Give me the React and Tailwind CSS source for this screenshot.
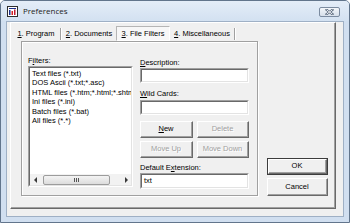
import React from 'react';

const sunken = "border-t border-l border-[#a0a0a0] border-b border-r border-b-white border-r-white";

function AppIcon() {
  return (
    <svg width="11" height="11" viewBox="0 0 11 11" className="shrink-0">
      <rect x="0.5" y="0.5" width="10" height="10" fill="#fff" stroke="#2d2d2d" />
      <rect x="2" y="2" width="7" height="1" fill="#1b2f8c" />
      <rect x="2" y="4" width="1.5" height="5" fill="#1b2f8c" />
      <rect x="4.5" y="5" width="1.5" height="4" fill="#d42020" />
      <rect x="7" y="3.5" width="1.5" height="5.5" fill="#c01830" />
    </svg>
  );
}

function CloseButton() {
  return (
    <div className="w-[21px] h-[10px] mt-[1px] rounded-[2px] border border-[#7b8ba0] bg-gradient-to-b from-[#f3f6fa] to-[#d6dfea] flex items-center justify-center">
      <svg width="9" height="6" viewBox="0 0 9 6">
        <path d="M1.5 0.8 L7.5 5.2 M7.5 0.8 L1.5 5.2" stroke="#55657a" strokeWidth="2.2" strokeLinecap="square" />
        <path d="M1.5 0.8 L7.5 5.2 M7.5 0.8 L1.5 5.2" stroke="#fff" strokeWidth="0.9" />
      </svg>
    </div>
  );
}

function TextBox({ value, className = "" }) {
  return (
    <div className={`${sunken} ${className}`}>
      <div className="h-full border-t border-l border-[#696969] border-b border-r border-b-[#e3e3e3] border-r-[#e3e3e3] bg-white pl-[2px] text-[7.5px] leading-[11px]">
        {value}
      </div>
    </div>
  );
}

function Btn({ children, disabled, isDefault, className = "" }) {
  const inner = (
    <div className="h-full border-t border-l border-white border-b border-r border-b-[#696969] border-r-[#696969]">
      <div className={`h-full border-b border-r border-[#a0a0a0] flex items-center justify-center text-[7.5px] ${disabled ? "text-[#a0a0a0] [text-shadow:1px_1px_0_#fff]" : "text-black"}`}>
        {children}
      </div>
    </div>
  );
  if (isDefault) {
    return <div className={`border border-[#3c3c3c] bg-[#f0f0f0] ${className}`}>{inner}</div>;
  }
  return <div className={`bg-[#f0f0f0] ${className}`}>{inner}</div>;
}

function Tab({ num, label, selected, w }) {
  return (
    <div
      className={`h-[15px] flex items-center justify-center text-[7.5px] ${w} ${
        selected ? "bg-[#f7f7f7] border-t border-l border-[#b5b5b5] border-b border-r border-b-white border-r-white" : ""
      }`}
    >
      <span><u>{num}</u>. {label}</span>
    </div>
  );
}

function Sep() {
  return <div className="h-[12px] w-[2px] border-l border-[#a0a0a0] border-r border-r-white" />;
}

const filters = [
  "Text files (*.txt)",
  "DOS Ascii (*.txt;*.asc)",
  "HTML files (*.htm;*.html;*.shtml)",
  "Ini files (*.ini)",
  "Batch files (*.bat)",
  "All files (*.*)",
];

function ScrollBar() {
  return (
    <div className="h-[11px] flex items-center bg-[#f2f2f2]">
      <div className="w-[11px] h-full flex items-center justify-center">
        <svg width="4" height="6" viewBox="0 0 4 6"><path d="M3 0 L0 3 L3 6 Z" fill="#3a3a3a" /></svg>
      </div>
      <div className="ml-[2px] w-[67px] h-[10px] rounded-[2px] border border-[#9c9c9c] bg-gradient-to-b from-[#f4f4f4] to-[#dcdcdc] flex items-center justify-center gap-[1px]">
        <div className="w-[1px] h-[4px] bg-[#555]" />
        <div className="w-[1px] h-[4px] bg-[#555]" />
        <div className="w-[1px] h-[4px] bg-[#555]" />
      </div>
      <div className="flex-1" />
      <div className="w-[11px] h-full flex items-center justify-center">
        <svg width="4" height="6" viewBox="0 0 4 6"><path d="M1 0 L4 3 L1 6 Z" fill="#3a3a3a" /></svg>
      </div>
    </div>
  );
}

export default function App() {
  return (
    <div className="w-[350px] h-[223px] bg-[#d1dff0] border border-[#62758c] rounded-t-[5px] flex flex-col overflow-hidden font-['Liberation_Sans',Arial,sans-serif] text-black">
      {/* title bar */}
      <div className="h-[20px] flex items-center pl-[6px] pr-[9px] bg-gradient-to-b from-[#e4edf8] to-[#d3e1f1]">
        <AppIcon />
        <span className="ml-[5px] text-[8px] font-['Open_Sans',sans-serif] text-[#1c1c1c]">Preferences</span>
        <div className="ml-auto"><CloseButton /></div>
      </div>

      {/* client */}
      <div className="flex-1 mx-[5px] mb-[5px] bg-[#f0f0f0] border border-[#9fb0c5] pl-[3px]">
        <div className="w-[326px] h-[187px] border-t border-l border-white border-b border-r border-b-[#696969] border-r-[#696969]">
          <div className="h-full border-b border-r border-[#a0a0a0] flex flex-col">
            {/* tabs */}
            <div className="mt-[3px] ml-[1px] flex items-center">
              <Tab num="1" label="Program" w="w-[48px]" />
              <Sep />
              <Tab num="2" label="Documents" w="w-[54px]" />
              <Tab num="3" label="File Filters" w="w-[54px]" selected />
              <Tab num="4" label="Miscellaneous" w="w-[64px]" />
              <Sep />
            </div>

            {/* body */}
            <div className="flex pl-[10px]">
              <div className="w-[237px] h-[155px] border border-[#a0a0a0] shadow-[inset_1px_1px_0_#fff,1px_1px_0_#fff] flex pl-[6px]">
                {/* left column */}
                <div className="w-[105px] flex flex-col">
                  <div className="mt-[14px] h-[10px] leading-[10px] text-[7.5px]">F<u>i</u>lters:</div>
                  <div className={`${sunken} h-[121px]`}>
                    <div className="h-full border-t border-l border-[#696969] border-b border-r border-b-[#e3e3e3] border-r-[#e3e3e3] bg-white flex flex-col">
                      <div className="flex-1 overflow-hidden pl-[2px] pt-[1px] text-[7.5px] leading-[9.4px] whitespace-nowrap">
                        {filters.map(f => <div key={f}>{f}</div>)}
                      </div>
                      <ScrollBar />
                    </div>
                  </div>
                </div>

                {/* right column */}
                <div className="ml-[7px] w-[109px] flex flex-col">
                  <div className="mt-[16px] h-[10px] leading-[10px] text-[7.5px]"><u>D</u>escription:</div>
                  <TextBox className="h-[15px]" />
                  <div className="mt-[6px] h-[10px] leading-[10px] text-[7.5px]"><u>W</u>ild Cards:</div>
                  <TextBox className="mt-[1px] h-[15px]" />
                  <div className="mt-[6px] flex gap-[4px]">
                    <Btn className="w-[53px] h-[17px]"><span><u>N</u>ew</span></Btn>
                    <Btn className="w-[52px] h-[17px]" disabled>Delete</Btn>
                  </div>
                  <div className="mt-[3px] flex gap-[4px]">
                    <Btn className="w-[53px] h-[17px]" disabled>Move Up</Btn>
                    <Btn className="w-[52px] h-[17px]" disabled>Move Down</Btn>
                  </div>
                  <div className="mt-[5px] h-[10px] leading-[10px] text-[7.5px]">Default E<u>x</u>tension:</div>
                  <TextBox className="h-[16px]" value="txt" />
                </div>
              </div>

              {/* OK / Cancel */}
              <div className="ml-[9px] w-[61px] flex flex-col justify-end gap-[3px]">
                <Btn isDefault className="h-[17px]">OK</Btn>
                <Btn className="h-[18px]">Cancel</Btn>
              </div>
            </div>
          </div>
        </div>
      </div>
    </div>
  );
}
